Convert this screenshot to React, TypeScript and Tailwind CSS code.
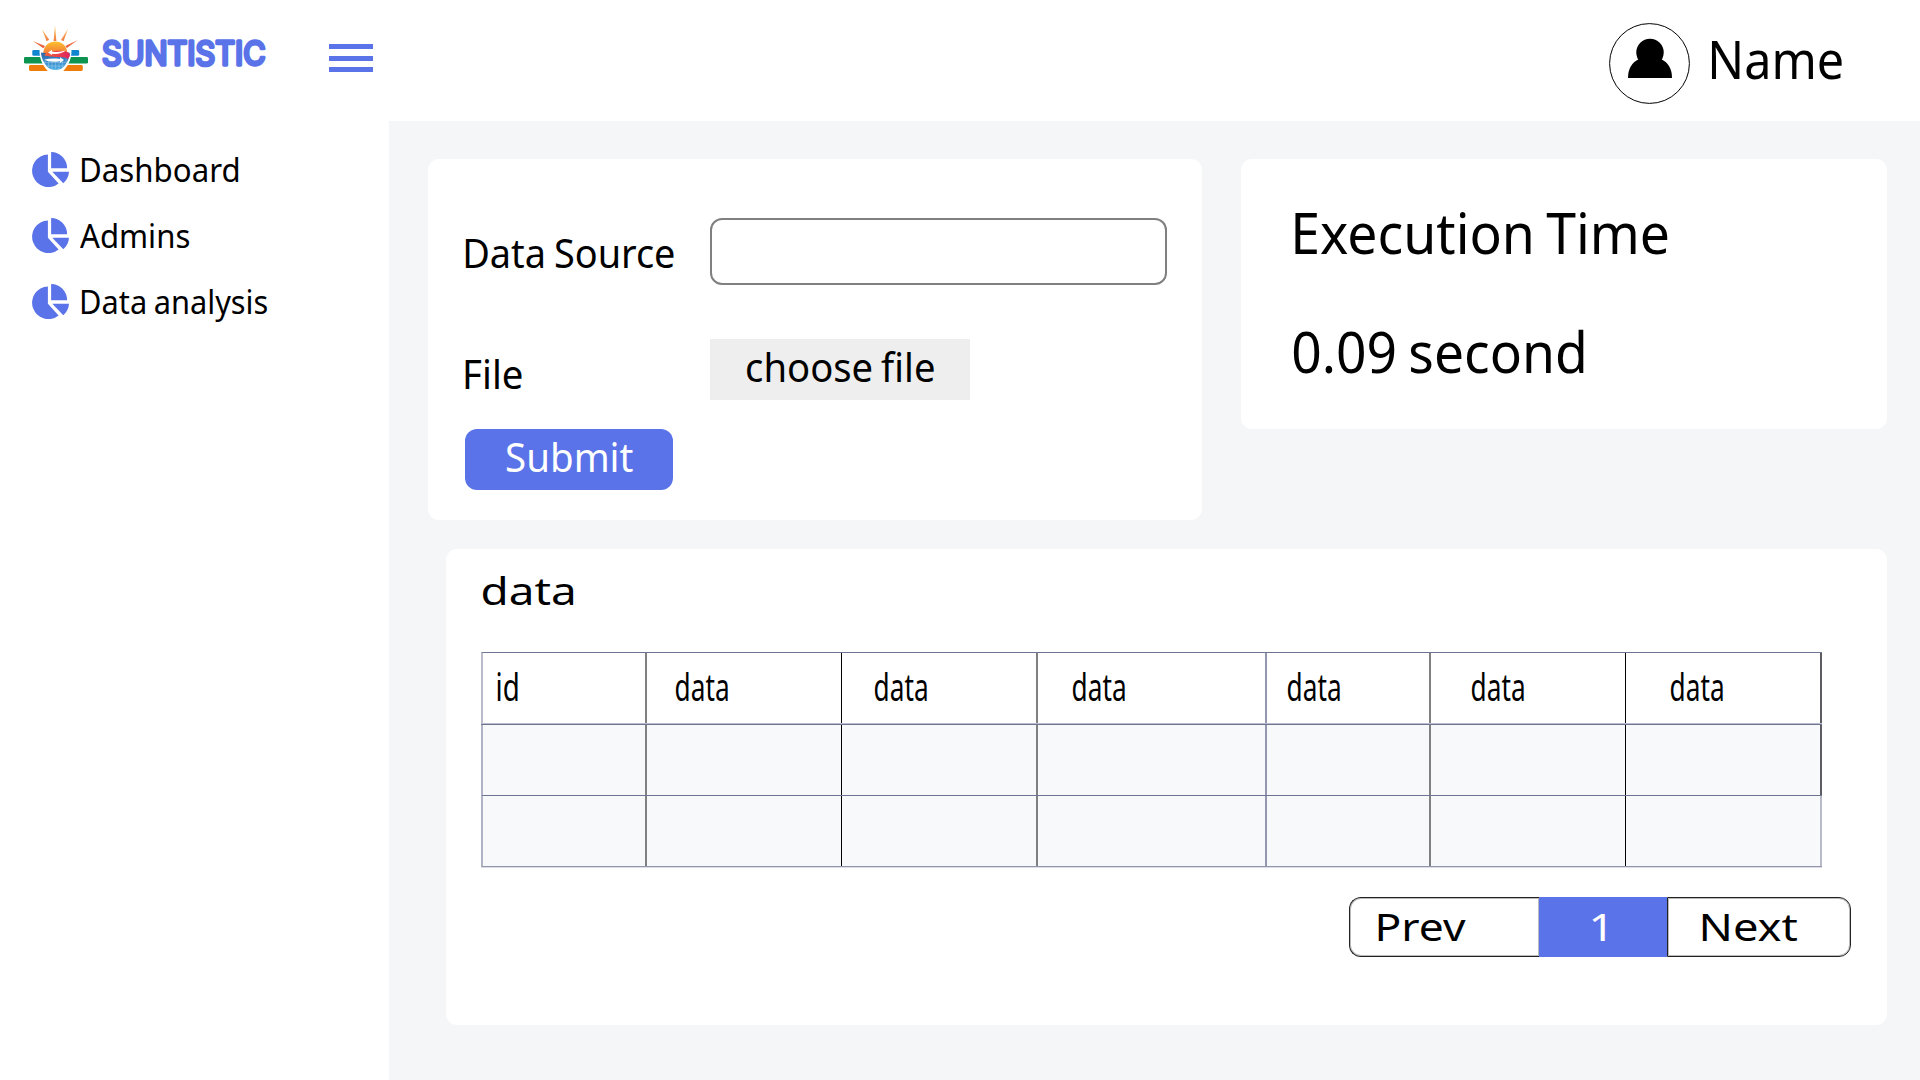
import { useLayoutEffect, useRef, useState } from "react";
import type { ReactNode } from "react";

/** Single-line label whose glyphs are stretched to span the width of its box. */
function Label({ className, children }: { className: string; children: string }) {
  const box = useRef<HTMLSpanElement>(null);
  const [transform, setTransform] = useState("none");

  useLayoutEffect(() => {
    const el = box.current;
    const ctx = document.createElement("canvas").getContext("2d");
    if (!el || !ctx) return;
    const style = getComputedStyle(el);
    ctx.font = `${style.fontWeight} ${style.fontSize} ${style.fontFamily}`;
    ctx.wordSpacing = style.wordSpacing;
    const m = ctx.measureText(children);
    const scale = el.clientWidth / (m.actualBoundingBoxLeft + m.actualBoundingBoxRight);
    setTransform(`translateX(${m.actualBoundingBoxLeft * scale}px) scaleX(${scale})`);
  }, [children]);

  return (
    <span ref={box} className={`block shrink-0 whitespace-nowrap leading-none [word-spacing:-0.05em] ${className}`}>
      <span className="block w-max origin-left" style={{ transform }}>
        {children}
      </span>
    </span>
  );
}

function SunLogo() {
  return (
    <svg className="h-[48px] w-[66px] shrink-0" viewBox="0 0 66 48">
      <defs>
        <linearGradient id="ray" x1="0" y1="0" x2="0" y2="22" gradientUnits="userSpaceOnUse">
          <stop offset="0" stopColor="#fdd25a" />
          <stop offset="1" stopColor="#ea5b3c" />
        </linearGradient>
        <linearGradient id="sun" x1="0" y1="0" x2="0" y2="1">
          <stop offset="0" stopColor="#fdc02f" />
          <stop offset="1" stopColor="#f37a35" />
        </linearGradient>
        <linearGradient id="band" x1="0" y1="0" x2="1" y2="0">
          <stop offset="0" stopColor="#f0643a" />
          <stop offset="1" stopColor="#e0245e" />
        </linearGradient>
        <linearGradient id="globe" x1="0" y1="0" x2="0" y2="1">
          <stop offset="0" stopColor="#2a63a8" />
          <stop offset="1" stopColor="#4fb0e6" />
        </linearGradient>
      </defs>
      <rect x="9.3" y="25" width="46.9" height="5.8" rx="1.4" fill="#0f86cf" />
      <rect x="1" y="32" width="64" height="6.6" rx="1.4" fill="#0d9450" />
      <rect x="6" y="40" width="53.8" height="6" rx="1.4" fill="#ee7d0b" />
      <path d="M16.5 26 C16.5 12 48.5 12 48.5 26 C48.5 36 44 42 38.5 48 H26.5 C21 42 16.5 36 16.5 26Z" fill="#fff" />
      <g fill="url(#ray)">
        <path d="M32 .3 L33.4 16 H30.6Z" />
        <path d="M19.2 4.6 L26.2 14.8 L23.6 16.2Z" />
        <path d="M44.9 4 L40.6 16.2 L38 14.9Z" />
        <path d="M9.8 16 L22 20.9 L20.4 23.2Z" />
        <path d="M54.8 15 L43.9 23.1 L42.3 20.9Z" />
      </g>
      <path d="M20.3 28.5 C20.3 12.5 44.3 12.5 44.3 28.5Z" fill="url(#sun)" />
      <path
        d="M18 27.5 C22 28.5 43 28.5 46.8 27.5 C46.5 35 42 41 39 43.3 C36 45.4 29 45.4 26 43.3 C23 41 18.3 35 18 27.5Z"
        fill="url(#globe)"
      />
      <path
        d="M22 35V38M25.5 35V42M29 37V44.5M32.5 37V44.5M36 37V44M39.5 35V42M43 33V37M21 37.5H44M24 41H41"
        stroke="#b9def5"
        strokeWidth=".5"
        opacity=".7"
      />
      <path
        d="M21.5 29.5 C25 25.5 42 24.5 46 28 C48 30.5 46 33 44.5 34 C42 31 33 33 27 31.5 C24 31 21.5 31 21.5 29.5Z"
        fill="url(#band)"
      />
      <path d="M25 27.4 L29 24.8 V26.4 C34 27.5 38 26.8 43 25.3 C39 29 34 29.2 29 28.7 V30Z" fill="#fff" />
      <path d="M41 35 L37 32.2 V34 C31 33.2 26 33.7 21.5 34.5 C25 37.2 31 37 37 36.2 V38Z" fill="#fff" />
    </svg>
  );
}

function Wordmark() {
  return (
    <svg className="h-[48px] w-[174px] shrink-0 overflow-visible" viewBox="0 0 174 48">
      <text
        x="4"
        y="36.2"
        textLength="163.5"
        lengthAdjust="spacingAndGlyphs"
        fontFamily="Inter, sans-serif"
        fontWeight="400"
        fontSize="32.5"
        fill="#5a73e8"
        stroke="#5a73e8"
        strokeWidth="3.3"
        strokeLinejoin="round"
      >
        SUNTISTIC
      </text>
    </svg>
  );
}

function PieIcon() {
  return (
    <svg className="h-[35px] w-[37px] shrink-0" viewBox="-0.4 0 37 35" fill="#5a73e8">
      <path d="M15.5 2.4 V19.8 L26.2 31.4 A16.3 16.3 0 1 1 15.5 2.4Z" />
      <path d="M18.7 0 A16.2 16.2 0 0 1 34.7 16.2 H18.7Z" />
      <path d="M19.9 19.7 H36.6 C36.4 24.2 34.4 28 30.9 31.2Z" />
    </svg>
  );
}

function Avatar() {
  return (
    <svg className="h-[82px] w-[82px] shrink-0" viewBox="0 0 82 82">
      <circle cx="40.5" cy="40.5" r="39.9" fill="none" stroke="#000" />
      <circle cx="41" cy="29.4" r="13.7" />
      <path d="M19 55 C19 45.5 23 39.5 30 36 H52 C59 39.5 63 45.5 63 55Z" />
    </svg>
  );
}

function NavItem({ children }: { children: ReactNode }) {
  return (
    <a className="flex h-[35px] items-start gap-[12.5px]">
      <PieIcon />
      <div className="pt-[1.5px]">{children}</div>
    </a>
  );
}

const columns = [
  { label: "id", head: "w-[164px] pl-[14px]", body: "w-[164px]", line: "border-r-2 border-r-[#808080]", text: "w-[20.5px]" },
  { label: "data", head: "w-[195px] pl-[28.5px]", body: "w-[195px]", line: "border-r border-r-black", text: "w-[51.5px]" },
  { label: "data", head: "w-[196px] pl-[32.5px]", body: "w-[196px]", line: "border-r-2 border-r-[#808080]", text: "w-[51.5px]" },
  { label: "data", head: "w-[229px] pl-[35px]", body: "w-[229px]", line: "border-r-2 border-r-[#9398b0]", text: "w-[51.5px]" },
  { label: "data", head: "w-[164px] pl-[20.5px]", body: "w-[164px]", line: "border-r-2 border-r-[#808080]", text: "w-[51.5px]" },
  { label: "data", head: "w-[195px] pl-[40.5px]", body: "w-[195px]", line: "border-r border-r-black", text: "w-[51.5px]" },
  { label: "data", head: "w-[196px] pl-[44.5px]", body: "w-[196px]", line: "border-r-2", text: "w-[51.5px]" },
];

function DataTable() {
  return (
    <div className="w-[1341px]">
      <div className="flex h-[71px] border-l-2 border-t border-l-[#b9bbcb] border-t-[#6f7493]">
        {columns.map((c, i) => (
          <div key={i} className={`shrink-0 pt-[14px] ${c.head} ${c.line} ${i === 6 ? "border-r-[#5b5d63]" : ""}`}>
            <Label className={`text-[38px] ${c.text}`}>{c.label}</Label>
          </div>
        ))}
      </div>
      <div className="h-px bg-[#bcbed0]" />
      <div className="h-px bg-[#6f7493]" />
      <div className="flex h-[71px] border-l-2 border-b border-l-[#b0b3c4] border-b-[#6f7493] bg-[#f8f9fb]">
        {columns.map((c, i) => (
          <div key={i} className={`shrink-0 ${c.body} ${c.line} ${i === 6 ? "border-r-[#5b5d63]" : ""}`} />
        ))}
      </div>
      <div className="flex h-[71px] border-l-2 border-b border-l-[#b0b3c4] border-b-[#9296ad] bg-[#f8f9fb]">
        {columns.map((c, i) => (
          <div key={i} className={`shrink-0 ${c.body} ${c.line} ${i === 6 ? "border-r-[#b9bbcb]" : ""}`} />
        ))}
      </div>
      <div className="h-px bg-[#dcdee6]" />
    </div>
  );
}

function Pagination() {
  return (
    <div className="flex h-[60px] w-[502px]">
      <button className="flex w-[190px] items-start rounded-l-[12px] border border-r-0 border-[#222] pl-[28px] pt-[8.5px] shadow-[inset_0_0_0_1px_#bbb]">
        <Label className="w-[88px] text-[38.4px]">Prev</Label>
      </button>
      <button className="flex w-[128px] items-start bg-[#5a73e8] pl-[53px] pt-[9.5px] text-white">
        <Label className="w-[12.5px] text-[38.4px]">1</Label>
      </button>
      <button className="flex w-[184px] items-start rounded-r-[12px] border border-[#222] pl-[33.5px] pt-[8.5px] shadow-[inset_0_0_0_1px_#bbb]">
        <Label className="w-[96px] text-[38.4px]">Next</Label>
      </button>
    </div>
  );
}

export default function App() {
  return (
    <div className="flex h-[1080px] w-[1920px] flex-col overflow-hidden bg-white font-['Noto_Sans',sans-serif] text-black">
      <header className="flex h-[121px] shrink-0 items-start justify-between">
        <div className="flex items-start pl-[23px] pt-[25px]">
          <SunLogo />
          <div className="pl-[9px] pt-[4px]">
            <Wordmark />
          </div>
          <button className="ml-[57px] mt-[19px] flex h-[28px] w-[44px] flex-col justify-between">
            <span className="h-[5px] bg-[#5a73e8]" />
            <span className="h-[5px] bg-[#5a73e8]" />
            <span className="h-[5px] bg-[#5a73e8]" />
          </button>
        </div>
        <div className="flex items-start gap-[20.5px] pr-[79px] pt-[23px]">
          <Avatar />
          <div className="pt-[10px]">
            <Label className="w-[129.5px] text-[52px]">Name</Label>
          </div>
        </div>
      </header>

      <div className="flex min-h-0 flex-1">
        <nav className="flex w-[389px] shrink-0 flex-col gap-[31px] pl-[32px] pt-[31px]">
          <NavItem>
            <Label className="w-[155.5px] text-[32px]">Dashboard</Label>
          </NavItem>
          <NavItem>
            <Label className="-ml-[1.5px] w-[109px] text-[32px]">Admins</Label>
          </NavItem>
          <NavItem>
            <Label className="w-[185px] text-[32px]">Data analysis</Label>
          </NavItem>
        </nav>

        <main className="flex-1 bg-[#f4f6f8] pl-[39px] pt-[38px]">
          <div className="flex items-start gap-[39px]">
            <section className="h-[361px] w-[774px] shrink-0 rounded-[11px] bg-white pl-[37px] pt-[59px]">
              <div className="flex items-start">
                <div className="w-[245px] pt-[15px]">
                  <Label className="w-[208.5px] text-[40px]">Data Source</Label>
                </div>
                <input className="h-[67px] w-[457px] rounded-[12px] border-2 border-[#808080] bg-white outline-none" />
              </div>
              <div className="mt-[54px] flex items-start">
                <div className="w-[245px] pt-[15px]">
                  <Label className="w-[56.5px] text-[40px]">File</Label>
                </div>
                <button className="flex h-[61px] w-[260px] items-start bg-[#eee] pl-[37px] pt-[8px]">
                  <Label className="w-[187px] text-[40px]">choose file</Label>
                </button>
              </div>
              <button className="mt-[29px] flex h-[61px] w-[208px] items-start rounded-[12px] bg-[#5a73e8] pl-[41.5px] pt-[8px] text-white">
                <Label className="w-[126px] text-[40px]">Submit</Label>
              </button>
            </section>

            <section className="flex h-[270px] w-[646px] shrink-0 flex-col gap-[62px] rounded-[11px] bg-white pl-[52px] pt-[45px]">
              <Label className="ml-[2px] w-[373px] text-[57px]">Execution Time</Label>
              <Label className="w-[290.5px] text-[57px]">0.09 second</Label>
            </section>
          </div>

          <section className="ml-[18px] mt-[29px] h-[476px] w-[1441px] rounded-[11px] bg-white pl-[35px] pt-[22px]">
            <Label className="ml-[1.5px] w-[90.5px] text-[38px]">data</Label>
            <div className="mt-[43px]">
              <DataTable />
            </div>
            <div className="ml-[868px] mt-[29px]">
              <Pagination />
            </div>
          </section>
        </main>
      </div>
    </div>
  );
}
